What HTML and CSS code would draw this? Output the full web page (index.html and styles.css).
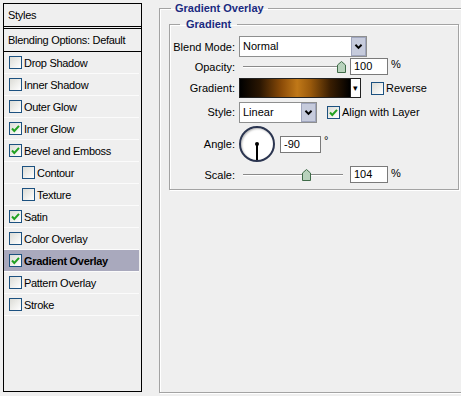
FILE: index.html
```html
<!DOCTYPE html>
<html>
<head>
    <title>Layer Style</title>
    <link rel="stylesheet" href="styles.css">
</head>
<body>
    <div class="window">
        <!-- Liste des styles -->
        <div class="styles-panel">
            <div class="panel-head">Styles</div>
            <div class="panel-blend">Blending Options: Default</div>
            <ul class="fx-list">
                <li class="fx"><span class="cb"></span>Drop Shadow</li>
                <li class="fx"><span class="cb"></span>Inner Shadow</li>
                <li class="fx"><span class="cb"></span>Outer Glow</li>
                <li class="fx"><span class="cb on"><svg viewBox="0 0 11 11"><path d="M2 5.5 L4.3 8 L9 2.8" /></svg></span>Inner Glow</li>
                <li class="fx"><span class="cb on"><svg viewBox="0 0 11 11"><path d="M2 5.5 L4.3 8 L9 2.8" /></svg></span>Bevel and Emboss</li>
                <li class="fx sub"><span class="cb"></span>Contour</li>
                <li class="fx sub"><span class="cb"></span>Texture</li>
                <li class="fx"><span class="cb on"><svg viewBox="0 0 11 11"><path d="M2 5.5 L4.3 8 L9 2.8" /></svg></span>Satin</li>
                <li class="fx"><span class="cb"></span>Color Overlay</li>
                <li class="fx active"><span class="cb on"><svg viewBox="0 0 11 11"><path d="M2 5.5 L4.3 8 L9 2.8" /></svg></span>Gradient Overlay</li>
                <li class="fx"><span class="cb"></span>Pattern Overlay</li>
                <li class="fx"><span class="cb"></span>Stroke</li>
            </ul>
        </div>

        <!-- Options du calque -->
        <fieldset class="group outer">
            <legend>Gradient Overlay</legend>
            <fieldset class="group inner">
                <legend>Gradient</legend>

                <div class="row row-blend">
                    <label>Blend Mode:</label>
                    <div class="select wide">
                        <span class="select-text">Normal</span>
                        <span class="select-btn"><svg viewBox="0 0 10 8"><path d="M1.5 2 L5 5.5 L8.5 2" /></svg></span>
                    </div>
                </div>

                <div class="row row-opacity">
                    <label>Opacity:</label>
                    <div class="slider">
                        <span class="track"></span>
                        <svg class="thumb" style="left: 98px" viewBox="0 0 9 12"><polygon points="0.5,4 4.5,0.5 8.5,4 8.5,11.5 0.5,11.5" /></svg>
                    </div>
                    <span class="num">100</span>
                    <span class="unit">%</span>
                </div>

                <div class="row row-gradient">
                    <label>Gradient:</label>
                    <div class="gradient-pick">
                        <span class="gradient-bar"></span>
                        <span class="gradient-btn">&#9662;</span>
                    </div>
                    <span class="check"><span class="cb"></span>Reverse</span>
                </div>

                <div class="row row-style">
                    <label>Style:</label>
                    <div class="select narrow">
                        <span class="select-text">Linear</span>
                        <span class="select-btn"><svg viewBox="0 0 10 8"><path d="M1.5 2 L5 5.5 L8.5 2" /></svg></span>
                    </div>
                    <span class="check check-align"><span class="cb on"><svg viewBox="0 0 11 11"><path d="M2 5.5 L4.3 8 L9 2.8" /></svg></span>Align with Layer</span>
                </div>

                <div class="row row-angle">
                    <label>Angle:</label>
                    <div class="dial"><span class="dial-hand"></span><span class="dial-dot"></span></div>
                    <span class="num angle">-90</span>
                    <span class="deg">&deg;</span>
                </div>

                <div class="row row-scale">
                    <label>Scale:</label>
                    <div class="slider">
                        <span class="track"></span>
                        <svg class="thumb" style="left: 63px" viewBox="0 0 9 12"><polygon points="0.5,4 4.5,0.5 8.5,4 8.5,11.5 0.5,11.5" /></svg>
                    </div>
                    <span class="num">104</span>
                    <span class="unit">%</span>
                </div>
            </fieldset>
        </fieldset>
    </div>
</body>
</html>
```

FILE: styles.css
```css
/* General */
body {
    margin: 0;
    width: 461px;
    height: 396px;
    overflow: hidden;
    background: #efefef;
    font-family: "Liberation Sans", Arial, sans-serif;
    font-size: 11px;
    color: #000;
}

.window {
    display: flex;
    align-items: flex-start;
}

/* Styles list */
.styles-panel {
    flex: none;
    width: 137px;
    height: 387px;
    margin: 3px 0 0 3px;
    border: 1px solid #000;
    background: #efefef;
    white-space: nowrap;
    letter-spacing: -0.3px;
}

.panel-head {
    height: 22px;
    line-height: 22px;
    padding-left: 4px;
    border-bottom: 3px double #000;
}

.panel-blend {
    height: 22px;
    line-height: 22px;
    padding-left: 4px;
    border-bottom: 1px solid #000;
}

.fx-list {
    list-style: none;
    margin: 0 2px 0 0;
    padding: 0;
}

.fx {
    display: flex;
    align-items: center;
    height: 21px;
    padding-left: 5px;
    border-bottom: 1px solid #fbfbfb;
}

.fx.sub {
    padding-left: 18px;
}

.fx.active {
    background: #a9a9bd;
    font-weight: bold;
}

/* Checkbox */
.cb {
    display: inline-flex;
    align-items: center;
    justify-content: center;
    width: 11px;
    height: 11px;
    margin-right: 2px;
    border: 1px solid #1c5180;
    background: linear-gradient(135deg, #dcdcd6, #ffffff);
    flex: none;
}

.cb svg {
    width: 11px;
    height: 11px;
}

.cb svg path {
    fill: none;
    stroke: #21a121;
    stroke-width: 2;
}

/* Group boxes */
.group {
    margin: 0;
    border: 1px solid #a3a3a3;
    box-shadow: inset 1px 1px 0 #fff, 1px 1px 0 #fff;
}

.group legend {
    color: #1a2a80;
    font-weight: bold;
    line-height: 14px;
}

.outer {
    flex: none;
    width: 302px;
    height: 392px;
    box-sizing: border-box;
    margin: 1px 0 0 17px;
    padding: 2px 0 0 9px;
    border-right: none;
}

.outer > legend {
    margin-left: 2px;
    padding: 0 4px;
}

.inner {
    width: 288px;
    padding: 0 0 6px 0;
}

.inner > legend {
    margin-left: 10px;
    padding: 0 6px;
}

/* Form rows */
.row {
    display: flex;
    align-items: center;
}

.row label {
    width: 65px;
    margin-right: 4px;
    text-align: right;
    flex: none;
}

.row-blend { margin-top: 5px; height: 21px; }
.row-opacity { height: 19px; }
.row-gradient { margin-top: 2px; height: 20px; }
.row-style { margin-top: 4px; height: 20px; }
.row-angle { margin-top: 4px; height: 36px; }
.row-scale { margin-top: 4px; height: 17px; }

/* Select */
.select {
    display: flex;
    height: 19px;
    border: 1px solid #8e8f8f;
    background: #fff;
}

.select.wide { width: 126px; }
.select.narrow { width: 76px; }

.select-text {
    flex: 1;
    line-height: 19px;
    padding-left: 3px;
}

.select-btn {
    display: flex;
    align-items: center;
    justify-content: center;
    width: 15px;
    background: #c6cbdc;
    border: 1px solid #9fa5bd;
    box-sizing: border-box;
}

.select-btn svg {
    width: 9px;
    height: 7px;
}

.select-btn path {
    fill: none;
    stroke: #000;
    stroke-width: 2.2;
}

/* Slider */
.slider {
    position: relative;
    width: 107px;
    height: 14px;
    display: flex;
    align-items: center;
}

.track {
    margin-left: 4px;
    width: 100px;
    height: 1px;
    background: #8a8a8a;
    border-bottom: 1px solid #fff;
}

.thumb {
    position: absolute;
    top: 1px;
    width: 9px;
    height: 12px;
}

.thumb polygon {
    fill: #b8d2bc;
    stroke: #3f6b48;
    stroke-width: 1;
}

.num {
    width: 33px;
    height: 15px;
    line-height: 15px;
    padding-left: 3px;
    margin-left: 4px;
    border: 1px solid #7a7a7a;
    background: #fff;
}

.unit {
    margin-left: 3px;
    align-self: flex-start;
    margin-top: 1px;
}

/* Gradient */
.gradient-pick {
    display: flex;
    width: 122px;
    height: 20px;
}

.gradient-bar {
    flex: 1;
    border: 1px solid #222;
    background: linear-gradient(90deg, #000 0%, #2a1602 18%, #8c4c08 38%, #c07818 52%, #9a5a0c 64%, #3a1e02 82%, #000 100%);
}

.gradient-btn {
    width: 9px;
    border: 1px solid #222;
    border-left: none;
    background: #fff;
    font-size: 9px;
    line-height: 18px;
    text-align: center;
}

.check {
    display: flex;
    align-items: center;
    margin-left: 10px;
}

.check-align {
    margin-left: 10px;
}

/* Angle dial */
.dial {
    position: relative;
    width: 32px;
    height: 32px;
    border: 2px solid #2b3550;
    border-radius: 50%;
    background: #fff;
    box-shadow: inset 1px 1px 2px #b8b8b8;
}

.dial-dot {
    position: absolute;
    left: 14px;
    top: 14px;
    width: 4px;
    height: 4px;
    border-radius: 50%;
    background: #000;
}

.dial-hand {
    position: absolute;
    left: 15px;
    top: 16px;
    width: 2px;
    height: 16px;
    background: #000;
}

.num.angle {
    width: 36px;
    margin-left: 5px;
}

.deg {
    margin-left: 3px;
    align-self: flex-start;
    margin-top: 8px;
}
```
